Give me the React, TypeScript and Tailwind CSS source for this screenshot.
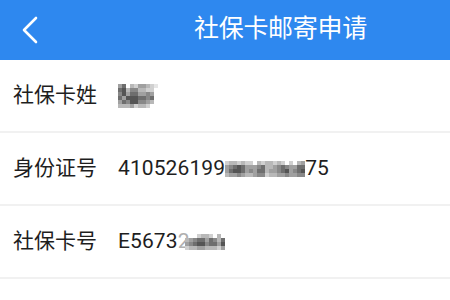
import React from "react";

const FONT = "Roboto, 'Noto Sans CJK SC', 'Noto Sans', sans-serif";

function Mosaic({ rows, cell }: { rows: string[]; cell: number }) {
  const shades: Record<string, string> = {
    ".": "transparent",
    "1": "#e6e6e6",
    "2": "#d0d0d0",
    "3": "#b8b8b8",
    "4": "#a0a0a0",
    "5": "#888888",
    "6": "#6e6e6e",
    "7": "#555555",
  };
  return (
    <div className="flex flex-col">
      {rows.map((r, i) => (
        <div key={i} className="flex">
          {r.split("").map((c, j) => (
            <div
              key={j}
              style={{ width: cell, height: cell, backgroundColor: shades[c] }}
            />
          ))}
        </div>
      ))}
    </div>
  );
}

function Row({ label, children }: { label: string; children: React.ReactNode }) {
  return (
    <div className="flex h-[73px] items-center border-b-2 border-[#f1f1f1] bg-white">
      <div className="w-[118px] shrink-0 pl-[13px] text-[21px] text-[#1e1e1e]">{label}</div>
      <div className="flex items-center text-[21px] text-[#1e1e1e]">{children}</div>
    </div>
  );
}

export default function App() {
  return (
    <div className="h-[300px] w-[450px] overflow-hidden bg-white" style={{ fontFamily: FONT }}>
      <div className="flex h-[60px] items-center bg-[#2e88ef]">
        <svg width="18" height="28" viewBox="0 0 18 28" className="ml-[21px]">
          <path d="M15 2 L3 14 L15 26" fill="none" stroke="#ffffff" strokeWidth="2.6" strokeLinecap="round" strokeLinejoin="round" />
        </svg>
        <div className="ml-[155px] pb-[3px] text-[25px] tracking-[-0.3px] text-white">社保卡邮寄申请</div>
      </div>
      <Row label="社保卡姓">
        <Mosaic
          cell={4}
          rows={[
            "46.3244321.",
            "673553322..",
            "574664454..",
            "647776656..",
            "465775543..",
            "33342332...",
          ]}
        />
      </Row>
      <Row label="身份证号">
        <span className="tracking-[0.1px]">410526199</span>
        <Mosaic
          cell={4}
          rows={[
            "2332322.3233232.2.34",
            "45676444563345654466",
            "46776454663445674567",
            "34454334552334454455",
          ]}
        />
        <span className="tracking-[0.1px]">75</span>
      </Row>
      <Row label="社保卡号">
        <span className="tracking-[0.1px]">E5673</span>
        <span className="text-[#b0b0b0]">2</span>
        <div className="-ml-[4px]">
          <Mosaic
            cell={4}
            rows={[
              "...2332.3.",
              "3456646536",
              "4567756647",
              "2334433324",
            ]}
          />
        </div>
      </Row>
    </div>
  );
}
